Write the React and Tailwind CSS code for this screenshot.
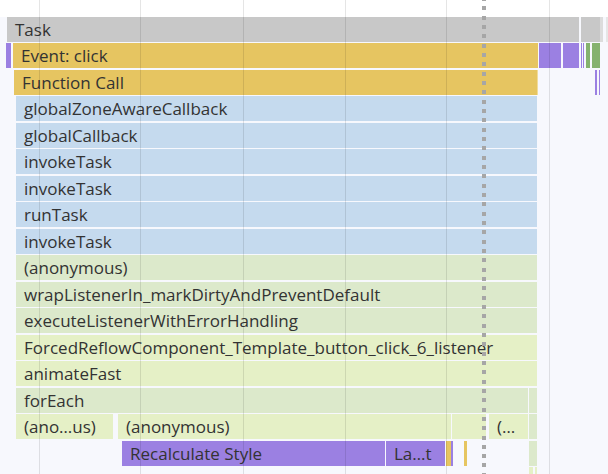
import React from "react";

const C = {
  grey: "bg-[#c8c8c8]",
  greyL: "bg-[#dcdcdc]",
  yellow: "bg-[#e6c561]",
  purple: "bg-[#9b80e2]",
  green: "bg-[#85b26e]",
  blue: "bg-[#c5daee]",
  g1: "bg-[#dce9cb]",
  g2: "bg-[#e5f0c6]",
};

const rows = [
  [
    [7, 579, C.grey, "Task"],
    [581, 600, C.grey],
    [600, 603, C.greyL],
    [606, 608, "bg-[#e6e6e6]"],
  ],
  [
    [6, 11, C.purple],
    [13, 538, C.yellow, "Event: click"],
    [539, 561, C.purple],
    [563, 579, C.purple],
    [581, 582, C.purple],
    [583, 584, C.purple],
    [586, 590, C.green],
    [592, 600, C.green],
  ],
  [
    [14, 537, C.yellow, "Function Call"],
    [537, 538, "bg-[#f0dc9c]"],
    [595, 597, C.purple],
    [599, 600, C.purple],
  ],
  [[16, 537, C.blue, "globalZoneAwareCallback"]],
  [[16, 537, C.blue, "globalCallback"]],
  [[16, 537, C.blue, "invokeTask"]],
  [[16, 537, C.blue, "invokeTask"]],
  [[16, 537, C.blue, "runTask"]],
  [[16, 537, C.blue, "invokeTask"]],
  [[16, 537, C.g1, "(anonymous)"]],
  [[16, 537, C.g1, "wrapListenerIn_markDirtyAndPreventDefault"]],
  [[16, 537, C.g1, "executeListenerWithErrorHandling"]],
  [[16, 537, C.g2, "ForcedReflowComponent_Template_button_click_6_listener"]],
  [[16, 537, C.g2, "animateFast"]],
  [
    [16, 528, C.g1, "forEach"],
    [529, 537, C.g1],
  ],
  [
    [16, 113, C.g2, "(ano…us)"],
    [118, 451, C.g2, "(anonymous)"],
    [452, 486, C.g2],
    [489, 528, C.g2, "(…"],
    [529, 537, C.g1],
  ],
  [
    [122, 385, C.purple, "Recalculate Style"],
    [386, 445, C.purple, "La…t"],
    [446, 451, C.yellow],
    [451, 453, C.purple],
    [464, 467, C.yellow],
    [529, 537, C.g1],
  ],
  [
    [529, 533, C.g2],
    [535, 537, C.g2],
  ],
];

function Row({ segs }) {
  let prev = 0;
  return (
    <div className="flex h-[26.5px] shrink-0">
      {segs.map(([x0, x1, cls, label], i) => {
        const ml = x0 - prev;
        prev = x1;
        return (
          <div
            key={i}
            className={`h-[25px] shrink-0 overflow-hidden whitespace-nowrap text-[17px] leading-[26px] text-[#333333] ${cls}`}
            style={{ marginLeft: ml, width: x1 - x0, paddingLeft: label ? 8 : 0 }}
          >
            {label}
          </div>
        );
      })}
    </div>
  );
}

const gridXs = [39, 140, 243, 345, 446, 549];

export default function App() {
  return (
    <div
      className="relative h-[474px] w-[608px] overflow-hidden bg-[#f7f8fd]"
      style={{ fontFamily: '"Open Sans", "Noto Sans", sans-serif' }}
    >
      <div className="h-[16.5px] bg-white" />
      <div className="flex flex-col">
        {rows.map((segs, i) => (
          <Row key={i} segs={segs} />
        ))}
      </div>
      {gridXs.map((x) => (
        <div
          key={x}
          className="pointer-events-none absolute top-0 bottom-0 w-px bg-black/10"
          style={{ left: x }}
        />
      ))}
      <div className="pointer-events-none absolute top-[-2.6px] bottom-0 left-[482px] w-[4px] bg-[image:repeating-linear-gradient(to_bottom,#a6a6a6_0px,#a6a6a6_4px,transparent_4px,transparent_9.33px)]" />
    </div>
  );
}
